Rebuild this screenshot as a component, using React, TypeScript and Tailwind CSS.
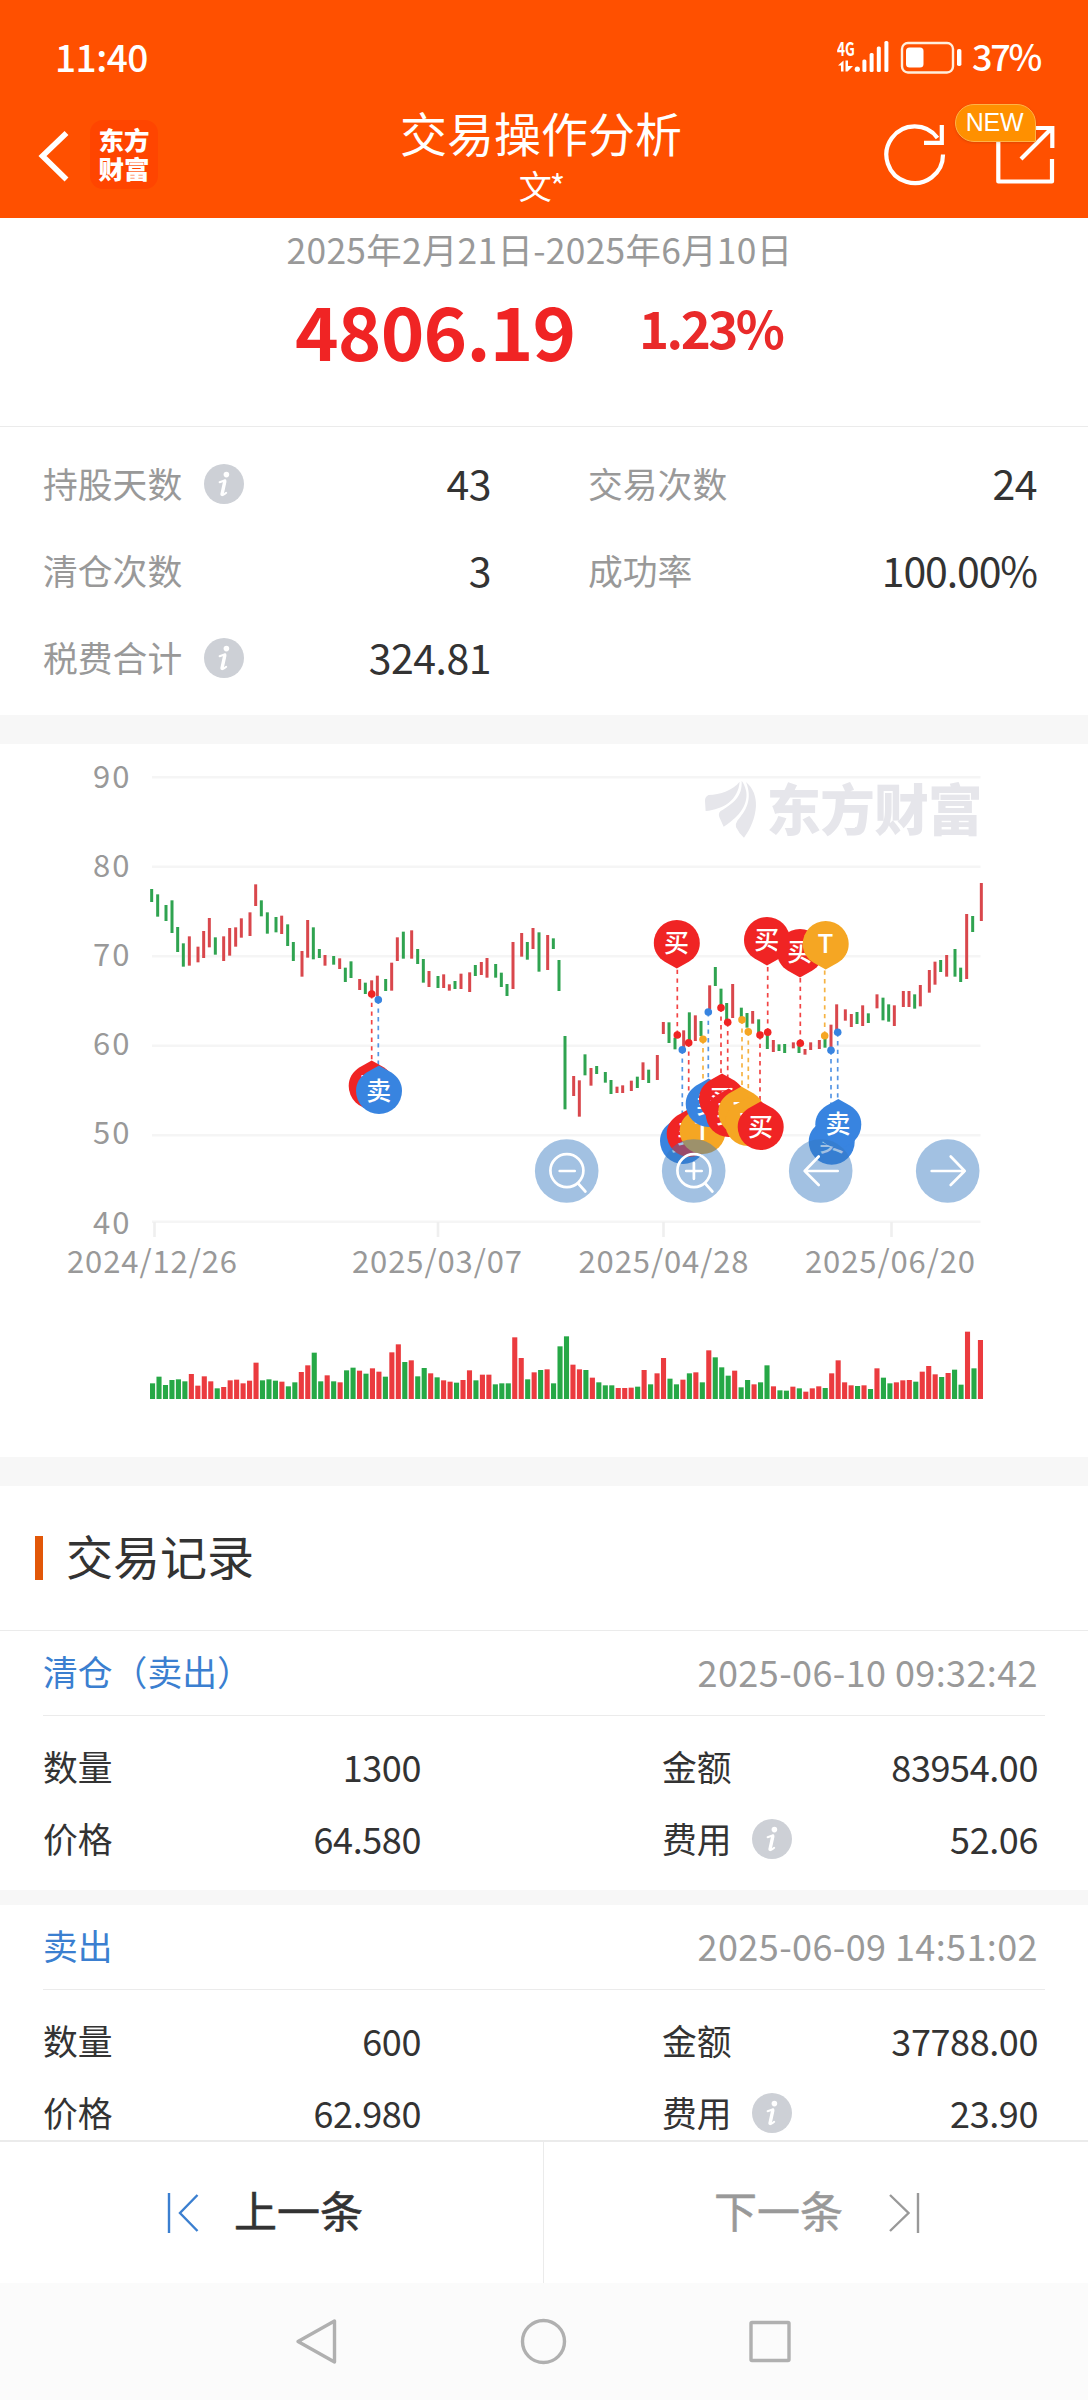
import React from "react";

const UP = "#d9474c";
const DOWN = "#2fa350";

/* Daily high/low bars: [direction, x centre, high y, low y] in chart units. */
type Bar = [string, number, number, number];

const barsLeft: Bar[] = [
  ["d", 275, 417, 456], ["d", 293, 433, 500], ["d", 318, 465, 513], ["d", 336, 451, 549], ["d", 353, 531, 606],
  ["d", 370, 580, 650], ["u", 388, 559, 647], ["u", 414, 590, 637], ["u", 431, 543, 624], ["u", 448, 504, 592],
  ["d", 466, 562, 614], ["u", 491, 559, 633], ["u", 509, 534, 617], ["u", 527, 532, 590], ["u", 544, 505, 563],
  ["u", 570, 487, 558], ["u", 587, 403, 468], ["d", 604, 451, 499], ["d", 622, 487, 551], ["d", 648, 501, 547],
  ["u", 665, 497, 552], ["d", 683, 523, 588], ["d", 700, 576, 633], ["u", 726, 603, 680], ["u", 743, 510, 623],
  ["d", 760, 532, 628], ["d", 778, 597, 624], ["u", 795, 615, 647], ["d", 821, 618, 644], ["u", 839, 625, 657],
  ["d", 856, 653, 696], ["d", 873, 634, 684], ["u", 899, 687, 720], ["d", 916, 698, 732], ["u", 935, 691, 732],
  ["u", 952, 677, 740], ["d", 977, 687, 723], ["u", 995, 638, 722], ["u", 1012, 562, 633], ["d", 1030, 545, 626],
  ["u", 1055, 541, 626], ["d", 1073, 597, 642], ["d", 1090, 627, 698], ["u", 1107, 663, 711], ["d", 1134, 678, 714],
  ["u", 1151, 673, 714], ["u", 1168, 703, 722], ["d", 1185, 693, 717],
];
const barsMiddle: Bar[] = [
  ["u", 63, 671, 717], ["u", 89, 667, 726], ["d", 106, 645, 678], ["u", 124, 636, 675], ["u", 141, 624, 683],
  ["d", 167, 642, 683], ["d", 184, 668, 711], ["d", 201, 702, 738], ["u", 219, 576, 717], ["u", 245, 549, 620],
  ["d", 262, 576, 629], ["u", 279, 534, 597], ["d", 297, 547, 665], ["u", 323, 555, 660], ["d", 340, 565, 597],
  ["d", 357, 630, 723], ["d", 375, 858, 1078], ["u", 401, 978, 1038], ["u", 418, 991, 1100], ["d", 435, 913, 976],
  ["u", 453, 954, 1007], ["d", 470, 948, 972], ["d", 496, 966, 998], ["d", 513, 990, 1032], ["u", 531, 1010, 1029],
  ["u", 548, 1006, 1029], ["u", 574, 992, 1023], ["d", 592, 980, 1014], ["u", 609, 937, 990], ["d", 626, 959, 999],
  ["u", 652, 915, 990], ["u", 670, 816, 852], ["d", 687, 817, 879], ["d", 705, 863, 898], ["u", 731, 841, 893],
  ["d", 748, 787, 880], ["u", 766, 796, 873], ["d", 783, 813, 858], ["u", 809, 706, 777], ["d", 826, 651, 708],
  ["d", 843, 716, 770], ["d", 860, 759, 815], ["u", 878, 702, 804], ["d", 904, 773, 805], ["d", 921, 789, 833],
  ["u", 938, 783, 821], ["d", 956, 808, 850],
];
const barsRight: Bar[] = [
  ["d", 82, 850, 897], ["u", 100, 870, 906], ["d", 117, 883, 903], ["d", 134, 882, 909], ["u", 160, 877, 895],
  ["d", 177, 885, 909], ["u", 195, 897, 914], ["u", 212, 877, 900], ["u", 238, 870, 897], ["d", 255, 866, 893],
  ["u", 273, 824, 893], ["u", 290, 763, 840], ["u", 316, 778, 812], ["u", 334, 792, 831], ["d", 351, 786, 822],
  ["u", 368, 766, 828], ["d", 385, 790, 819], ["u", 411, 733, 775], ["d", 429, 743, 811], ["d", 446, 763, 815],
  ["u", 463, 766, 828], ["u", 490, 723, 771], ["u", 507, 723, 771], ["d", 524, 733, 776], ["u", 541, 705, 769],
  ["u", 568, 660, 728], ["u", 585, 635, 704], ["d", 602, 630, 666], ["u", 620, 615, 680], ["d", 645, 597, 680],
  ["d", 662, 653, 696], ["u", 680, 492, 687], ["d", 698, 498, 546], ["u", 724, 399, 513],
];
const priceBars = [
  ...barsLeft.map(([d, x, h, l]) => ({ d, x: 60 + x / 3, h, l })),
  ...barsMiddle.map(([d, x, h, l]) => ({ d, x: 440 + x / 3, h, l })),
  ...barsRight.map(([d, x, h, l]) => ({ d, x: 740 + x / 3, h, l })),
];

/* Volume series: direction letter followed by the bar's top. */
const volumes =
  "d730 d710 d735 d720 d718 d724 u702 u737 u709 u724 d745 u741 u721 u719 u730 u722 u668 d721 d718 d722 u725 d739 d727 u696 u676 d638 d724 u706 d724 u727 d691 d683 u692 d701 u685 u695 d710 u637 u613 d666 u661 d709 d684 u700 d712 u721 u725 d728 u720 u691 d721 u704 u704 d733 d730 d730 u592 u654 d718 u697 d690 u688 d730 d619 d589 u674 u688 d690 u713 d727 d736 d736 u744 u744 u743 d740 u690 d733 u700 u654 d716 d733 u719 d700 u697 d727 u631 d652 d682 d707 u692 d742 d720 u733 d727 d676 u739 d751 d752 u740 d745 u755 u745 u739 d744 u700 u661 u727 u736 d738 u736 d747 u685 d713 d730 u727 u721 u720 d725 u695 u678 u703 d711 u699 d689 d734 u575 d685 u600".split(
    " "
  );

const BUY = { label: "买", color: "#f02424" };
const SELL = { label: "卖", color: "#3884e0" };
const DAY_T = { label: "T", color: "#f5a623" };

/* Trade pins, painted in order: x, pin centre y, dot x, dot y. */
const pins = [
  { k: BUY, x: 371.7, y: 1086, dx: 371.7, dy: 994 },
  { k: SELL, x: 379, y: 1091, dx: 378.3, dy: 999.7 },
  { k: SELL, x: 683, y: 1141, dx: 682.3, dy: 1049.7 },
  { k: BUY, x: 689.7, y: 1134, dx: 688.7, dy: 1042.7 },
  { k: DAY_T, x: 702.7, y: 1131, dx: 703, dy: 1039.3 },
  { k: SELL, x: 708.7, y: 1104, dx: 708.3, dy: 1012 },
  { k: BUY, x: 722, y: 1099, dx: 721, dy: 1007.7 },
  { k: BUY, x: 728.7, y: 1114, dx: 727.7, dy: 1022.3 },
  { k: DAY_T, x: 741.3, y: 1112, dx: 742, dy: 1019.7 },
  { k: DAY_T, x: 748, y: 1123, dx: 748.3, dy: 1031.7 },
  { k: BUY, x: 760.7, y: 1127, dx: 760, dy: 1035 },
  { k: BUY, x: 676.8, y: 943, dx: 677.3, dy: 1035 },
  { k: BUY, x: 767, y: 940, dx: 767.7, dy: 1032.3 },
  { k: BUY, x: 800, y: 952, dx: 800.3, dy: 1043.3 },
  { k: DAY_T, x: 825.7, y: 944, dx: 824.7, dy: 1035.7 },
  { k: SELL, x: 831.7, y: 1141.7, dx: 831, dy: 1050.3 },
  { k: SELL, x: 838.3, y: 1124.5, dx: 837.7, dy: 1032.3 },
];

function Pin({ k, x, y, dy }: (typeof pins)[number]) {
  const above = y < dy;
  return (
    <g transform={`translate(${x} ${y})`}>
      <path
        transform={above ? undefined : "scale(1 -1)"}
        d="M0 25.5 L-12 18.8 C-19 14.5 -23 8 -23 0 A23 23 0 0 1 23 0 C23 8 19 14.5 12 18.8 Z"
        fill={k.color}
      />
      <text x="-0.3" y="8.8" textAnchor="middle" fontSize={k.label === "T" ? 26 : 25} fontWeight="500" fill="#fff">
        {k.label}
      </text>
    </g>
  );
}

function RoundButton({ cx, children }: { cx: number; children: React.ReactNode }) {
  return (
    <g transform={`translate(${cx} 1171)`}>
      <circle r="31.8" fill="#3478c0" fillOpacity="0.46" />
      <g fill="none" stroke="#fff" strokeWidth="2.7" strokeLinecap="round" strokeLinejoin="round">
        {children}
      </g>
    </g>
  );
}

function TradeChart() {
  return (
    <svg
      className="block h-[713px] w-[1088px] shrink-0 font-['Noto_Sans_CJK_SC',sans-serif]"
      viewBox="0 744 1088 713"
    >
      {[777.3, 866.7, 956.2, 1045.7, 1135.2, 1221.8].map((y) => (
        <line key={y} x1="152" x2="980.5" y1={y} y2={y} stroke="#f5f5f5" strokeWidth="2.4" />
      ))}
      {[154.5, 438, 663.5, 891.5].map((x) => (
        <line key={x} x1={x} x2={x} y1="1222" y2="1237" stroke="#efefef" strokeWidth="2.6" />
      ))}
      <g fill="#999" fontSize="31">
        {[["90", 788], ["80", 877], ["70", 966], ["60", 1055], ["50", 1144], ["40", 1234]].map(([t, y]) => (
          <text key={t} x="93" y={y} textLength="36.5">{t}</text>
        ))}
        {[["2024/12/26", 67], ["2025/03/07", 352], ["2025/04/28", 578.5], ["2025/06/20", 805]].map(([t, x]) => (
          <text key={t} x={x} y="1273" textLength="170">{t}</text>
        ))}
      </g>

      <g fill="#e6e6eb">
        <g transform="translate(440 750) scale(0.3333)">
          <path d="M899 95 C880 120 840 134 806 135 Q795 140 795 152 L797 183 C850 178 895 150 899 95 Z" />
          <path d="M905 92 C908 140 880 160 842 183 Q834 190 838 201 L851 230 C890 205 925 170 919 125 Q914 103 905 92 Z" />
          <path d="M918 96 C940 115 949 140 948 168 C946 205 930 240 912 263 Q897 250 888 231 Q886 221 893 211 C915 185 940 150 918 96 Z" />
        </g>
        <text x="766.5" y="829.5" fontSize="54.5" fontWeight="900" textLength="216">东方财富</text>
      </g>

      {priceBars.map((b, i) => (
        <rect key={i} x={b.x - 1.5} y={750 + b.h / 3} width="3" height={(b.l - b.h) / 3} fill={b.d === "u" ? UP : DOWN} />
      ))}

      {pins.map((p, i) => (
        <g key={i} stroke={p.k.color}>
          <line
            x1={p.dx}
            x2={p.dx}
            y1={p.dy}
            y2={p.y < p.dy ? p.y + 24 : p.y - 24}
            strokeWidth="1.7"
            strokeDasharray="4.4 4.3"
            opacity="0.85"
          />
          <circle cx={p.dx} cy={p.dy} r="3.8" fill={p.k.color} stroke="none" />
        </g>
      ))}
      {pins.map((p, i) => (
        <Pin key={i} {...p} />
      ))}

      <RoundButton cx={566.7}>
        <circle cx="0.2" cy="-0.4" r="16.5" />
        <path d="M11.5 12.5 L18.7 20.5 M-7 0 H8" />
      </RoundButton>
      <RoundButton cx={693.7}>
        <circle cx="0.2" cy="-0.4" r="16.5" />
        <path d="M11.5 12.5 L18.7 20.5 M-7.5 0 H8 M0.2 -7.8 V7.8" />
      </RoundButton>
      <RoundButton cx={820.7}>
        <path d="M17 0 H-16 M-2 -14.5 L-16 0 L-2 14" />
      </RoundButton>
      <RoundButton cx={947.7}>
        <path d="M-16 0 H17 M3 -14.5 L17 0 L3 14" />
      </RoundButton>

      {volumes.map((v, i) => {
        const h = (777 - Number(v.slice(1))) / 3;
        return (
          <rect key={i} x={150 + i * 6.468} y={1399 - h} width="5.1" height={h} fill={v[0] === "u" ? "#eb3b3f" : "#26a846"} />
        );
      })}
    </svg>
  );
}

function InfoIcon() {
  return (
    <svg className="size-10 shrink-0" viewBox="0 0 40 40">
      <circle cx="20" cy="20" r="20" fill="#cdd0d6" />
      <circle cx="22.4" cy="10.6" r="2.8" fill="#fff" />
      <path
        d="M15.6 18.2 L21.2 16.2 L18.2 29.6 Q18.2 32.4 22.2 28.8"
        fill="none"
        stroke="#fff"
        strokeWidth="2"
        strokeLinejoin="round"
        strokeLinecap="round"
      />
      <path d="M20.8 17.4 L18 30.4" stroke="#fff" strokeWidth="3.4" strokeLinecap="round" />
    </svg>
  );
}

function Stat({ label, value, info, tight }: { label: string; value: string; info?: boolean; tight?: boolean }) {
  return (
    <div className="flex h-[87.2px] items-center">
      <span className="text-[34.8px] text-[#999]">{label}</span>
      {info && (
        <span className="ml-[22px] mt-[3px]">
          <InfoIcon />
        </span>
      )}
      <span className={`ml-auto text-[41px] text-[#333] ${tight ? "tracking-[-1.1px]" : "tracking-[-0.5px]"}`}>
        {value}
      </span>
    </div>
  );
}

type Trade = { type: string; time: string; qty: string; amount: string; price: string; fee: string };

function TradeCard({ t }: { t: Trade }) {
  return (
    <div className="h-[259px] shrink-0 bg-white text-[34.8px] text-[#333]">
      <div className="mx-[43px] flex h-[85px] items-center justify-between border-b border-[#ebebeb] pr-[7px] pb-1">
        <span className="text-[#3b7fd0]">{t.type}</span>
        <span className="text-[36px] tracking-[0.4px] text-[#999]">{t.time}</span>
      </div>
      <div className="ml-[43px] mr-[50px] grid grid-cols-[378px_376px] justify-between pt-[14px]">
        <div className="flex h-[72px] items-center justify-between">
          <span>数量</span>
          <span className="text-[36px] tracking-[-0.4px]">{t.qty}</span>
        </div>
        <div className="flex h-[72px] items-center justify-between">
          <span>金额</span>
          <span className="text-[36px] tracking-[-0.4px]">{t.amount}</span>
        </div>
        <div className="flex h-[72px] items-center justify-between">
          <span>价格</span>
          <span className="text-[36px] tracking-[-0.4px]">{t.price}</span>
        </div>
        <div className="flex h-[72px] items-center">
          <span>费用</span>
          <span className="ml-5 mt-[2px]">
            <InfoIcon />
          </span>
          <span className="ml-auto text-[36px] tracking-[-0.4px]">{t.fee}</span>
        </div>
      </div>
    </div>
  );
}

function StatusBar() {
  return (
    <div className="flex h-[110px] items-start justify-between pl-[55px] pr-[48px] text-white">
      <span className="mt-[31px] text-[37px] leading-[50px] font-medium tracking-[-0.5px]">11:40</span>
      <div className="flex items-start">
        <div className="mt-[38px] w-[18px]">
          <div className="origin-left scale-x-[0.72] text-[19px] leading-[20px] font-bold">4G</div>
        </div>
        <svg className="mt-[40px] -ml-[18px] h-[34px] w-[125px]" viewBox="837 40 125 34" fill="#fff">
          <path d="M838 65.5 L843.5 60.5 V71.5 H841 V65.5 Z M845.5 60.5 H848 V66 H853 L847.5 71.5 H845.5 Z" />
          <circle cx="857.3" cy="69.2" r="2.6" />
          <rect x="862.4" y="59.5" width="4" height="12.5" rx="1.5" />
          <rect x="869.6" y="53" width="4" height="19" rx="1.5" />
          <rect x="876.8" y="46.5" width="4" height="25.5" rx="1.5" />
          <rect x="884.4" y="41" width="4" height="31" rx="1.5" />
          <rect x="902" y="43" width="51" height="29.5" rx="6" fill="none" stroke="#ffefdd" strokeWidth="2.4" />
          <rect x="906" y="47.6" width="17.5" height="20" rx="3.5" />
          <rect x="957" y="49" width="4.4" height="17" rx="1.8" />
        </svg>
        <span className="mt-[30px] ml-[10px] text-[36px] leading-[50px] font-medium tracking-[-2.3px]">37%</span>
      </div>
    </div>
  );
}

function Header() {
  return (
    <header className="h-[218px] shrink-0 bg-[#ff5000]">
      <StatusBar />
      <div className="flex h-[108px] items-start text-white">
        <svg className="mt-[19px] ml-[36px] h-[54px] w-[36px]" viewBox="36 129 36 54" fill="none" stroke="#fff" strokeWidth="5.6">
          <path d="M66.5 133 L42.5 156 L66.5 179.5" />
        </svg>
        <div className="mt-[10px] ml-[18px] flex h-[69px] w-[68px] flex-col items-center justify-center rounded-[13px] bg-[#ff4500] pb-[3px] text-[25.5px] leading-[29px] font-black">
          <span>东方</span>
          <span>财富</span>
        </div>
        <div className="flex flex-1 flex-col items-center pl-[42px]">
          <h1 className="text-[47px] leading-[44px] font-normal">交易操作分析</h1>
          <div className="mt-[12px] text-[33px] leading-[38px] tracking-[-2px]">文*</div>
        </div>
        <svg className="mt-[12px] h-[64px] w-[66px]" viewBox="882 122 66 64" fill="none" stroke="#fff" strokeWidth="4.2">
          <path d="M943 154.5 A28.3 28.3 0 1 1 937.5 138" />
          <path d="M941.8 125 V142.8 H924" />
        </svg>
        <div className="relative mt-[12px] mr-[29px] ml-[45px]">
          <svg className="h-[64px] w-[66px]" viewBox="993 122 66 64" fill="none" stroke="#fff" strokeWidth="4.2">
            <path d="M1022 128 H998.3 V181.5 H1052 V159" strokeLinejoin="round" />
            <path d="M1035 128 H1052.3 V148 M1052 128 L1021 159" />
          </svg>
          <span className="absolute -top-[18px] -left-[38px] flex h-[38px] w-[81px] items-center justify-center rounded-[19px] rounded-br-none border border-[#ffb347] bg-[#ff9000] pr-[2px] font-['Liberation_Sans',sans-serif] text-[25px] tracking-[-0.3px] shadow-sm">
            NEW
          </span>
        </div>
      </div>
    </header>
  );
}

const trades: Trade[] = [
  { type: "清仓（卖出）", time: "2025-06-10 09:32:42", qty: "1300", amount: "83954.00", price: "64.580", fee: "52.06" },
  { type: "卖出", time: "2025-06-09 14:51:02", qty: "600", amount: "37788.00", price: "62.980", fee: "23.90" },
];

export default function App() {
  return (
    <div className="flex h-[2400px] w-[1088px] flex-col overflow-hidden bg-white font-['Noto_Sans_CJK_SC',sans-serif] whitespace-nowrap">
      <Header />
      <main className="flex min-h-0 flex-1 flex-col overflow-hidden">
        <section className="h-[209px] shrink-0 border-b border-[#ebebeb]">
          <div className="pt-[6px] pr-[9px] text-center text-[35.4px] leading-[50px] tracking-[0.3px] text-[#999]">
            2025年2月21日-2025年6月10日
          </div>
          <div className="flex items-start pl-[295px] text-[#f02424]">
            <span className="mt-[10px] w-[344px] text-[74px] leading-[90px] font-bold tracking-[-0.8px]">4806.19</span>
            <span className="mt-[23px] text-[51px] leading-[60px] font-bold tracking-[-2.5px] text-[#e92a2a]">1.23%</span>
          </div>
        </section>

        <section className="grid h-[288px] shrink-0 grid-cols-[448px_449px] content-start justify-between pt-[12px] pr-[51px] pl-[43px]">
          <Stat label="持股天数" value="43" info />
          <Stat label="交易次数" value="24" />
          <Stat label="清仓次数" value="3" />
          <Stat label="成功率" value="100.00%" tight />
          <Stat label="税费合计" value="324.81" info />
        </section>
        <div className="h-[29px] shrink-0 bg-[#f7f7f7]" />

        <TradeChart />
        <div className="h-[29px] shrink-0 bg-[#f7f7f7]" />

        <section className="flex h-[145px] shrink-0 items-center border-b border-[#ebebeb] pl-[35px]">
          <div className="h-[44px] w-[8px] bg-[#e25708]" />
          <h2 className="ml-[23px] pb-[5px] text-[47px] font-normal text-[#333]">交易记录</h2>
        </section>
        <TradeCard t={trades[0]} />
        <div className="h-[15px] shrink-0 bg-[#f7f7f7]" />
        <TradeCard t={trades[1]} />
      </main>

      <footer className="flex h-[143px] shrink-0 border-t-2 border-[#ebebeb] text-[43px]">
        <div className="flex w-[544px] items-center border-r border-[#ebebeb] pl-[167px] text-[#333]">
          <svg className="h-[40px] w-[32px]" viewBox="0 0 32 40" fill="none" stroke="#3b7fd0" strokeWidth="2.4">
            <path d="M2 0 V40 M30.5 2 L13 20 L30.5 38" />
          </svg>
          <span className="ml-[35px] pb-[6px] [-webkit-text-stroke:0.6px_#333]">上一条</span>
        </div>
        <div className="flex flex-1 items-center pl-[170px] text-[#999]">
          <span className="pb-[6px] [-webkit-text-stroke:0.5px_#999]">下一条</span>
          <svg className="ml-[45px] h-[40px] w-[32px]" viewBox="0 0 32 40" fill="none" stroke="#999" strokeWidth="2.4">
            <path d="M30 0 V40 M2 2 L20.5 20 L2 38" />
          </svg>
        </div>
      </footer>

      <nav className="flex h-[117px] shrink-0 items-center bg-[#fbfbfb] pl-[293px]">
        <svg className="h-[50px] w-[500px]" viewBox="293 2317 500 50" fill="none" stroke="#b0b0b0" strokeWidth="3.4" strokeLinejoin="round">
          <path d="M334.5 2321 V2362 L298 2341.5 Z" />
          <circle cx="543.5" cy="2341.5" r="21" />
          <rect x="751" y="2322.5" width="38" height="38" rx="1" />
        </svg>
      </nav>
    </div>
  );
}
